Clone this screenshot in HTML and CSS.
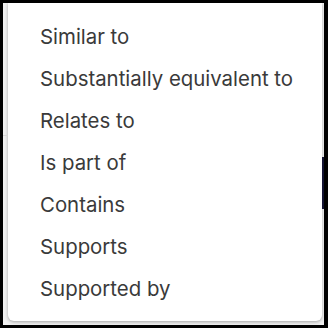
FILE: index.html
```html
<!DOCTYPE html>
<html>
<head>
<meta charset="utf-8">
<link rel="stylesheet" href="styles.css">
</head>
<body>
<div class="frame">
  <div class="backdrop">
    <div class="rule"></div>
    <div class="card">
      <ul class="menu">
        <li class="item">Similar to</li>
        <li class="item">Substantially equivalent to</li>
        <li class="item">Relates to</li>
        <li class="item">Is part of</li>
        <li class="item">Contains</li>
        <li class="item">Supports</li>
        <li class="item">Supported by</li>
      </ul>
    </div>
  </div>
  <div class="scroll-thumb"></div>
</div>
</body>
</html>
```
FILE: styles.css
```css
html, body {
  margin: 0;
  padding: 0;
  background: #ffffff;
}
.frame {
  position: relative;
  width: 328px;
  height: 328px;
  box-sizing: border-box;
  border-top: 3px solid #000;
  border-left: 3px solid #000;
  border-right: 4px solid #000;
  border-bottom: 3px solid #000;
  overflow: hidden;
}
.backdrop {
  position: relative;
  height: 100%;
  background: #f2f2f2;
  padding: 0 0 0 5px;
  box-sizing: border-box;
}
.rule {
  position: absolute;
  left: 0;
  top: 132px;
  width: 5px;
  height: 1px;
  background: #d8d8d8;
}
.card {
  width: 314px;
  height: 318px;
  background: #ffffff;
  border-radius: 0 0 6px 6px;
  box-shadow: 0 1px 3px rgba(0,0,0,0.25), 0 2px 6px rgba(0,0,0,0.08);
  box-sizing: border-box;
  padding: 13px 0 0 0;
}
.menu {
  list-style: none;
  margin: 0;
  padding: 0;
}
.item {
  height: 42px;
  line-height: 42px;
  padding-left: 32px;
  font-family: Inter, "Noto Sans", sans-serif;
  font-size: 20.4px;
  color: #3a3a3a;
  white-space: nowrap;
}
.scroll-thumb {
  position: absolute;
  right: -2px;
  top: 154px;
  width: 4px;
  height: 52px;
  background: #141433;
}
```
